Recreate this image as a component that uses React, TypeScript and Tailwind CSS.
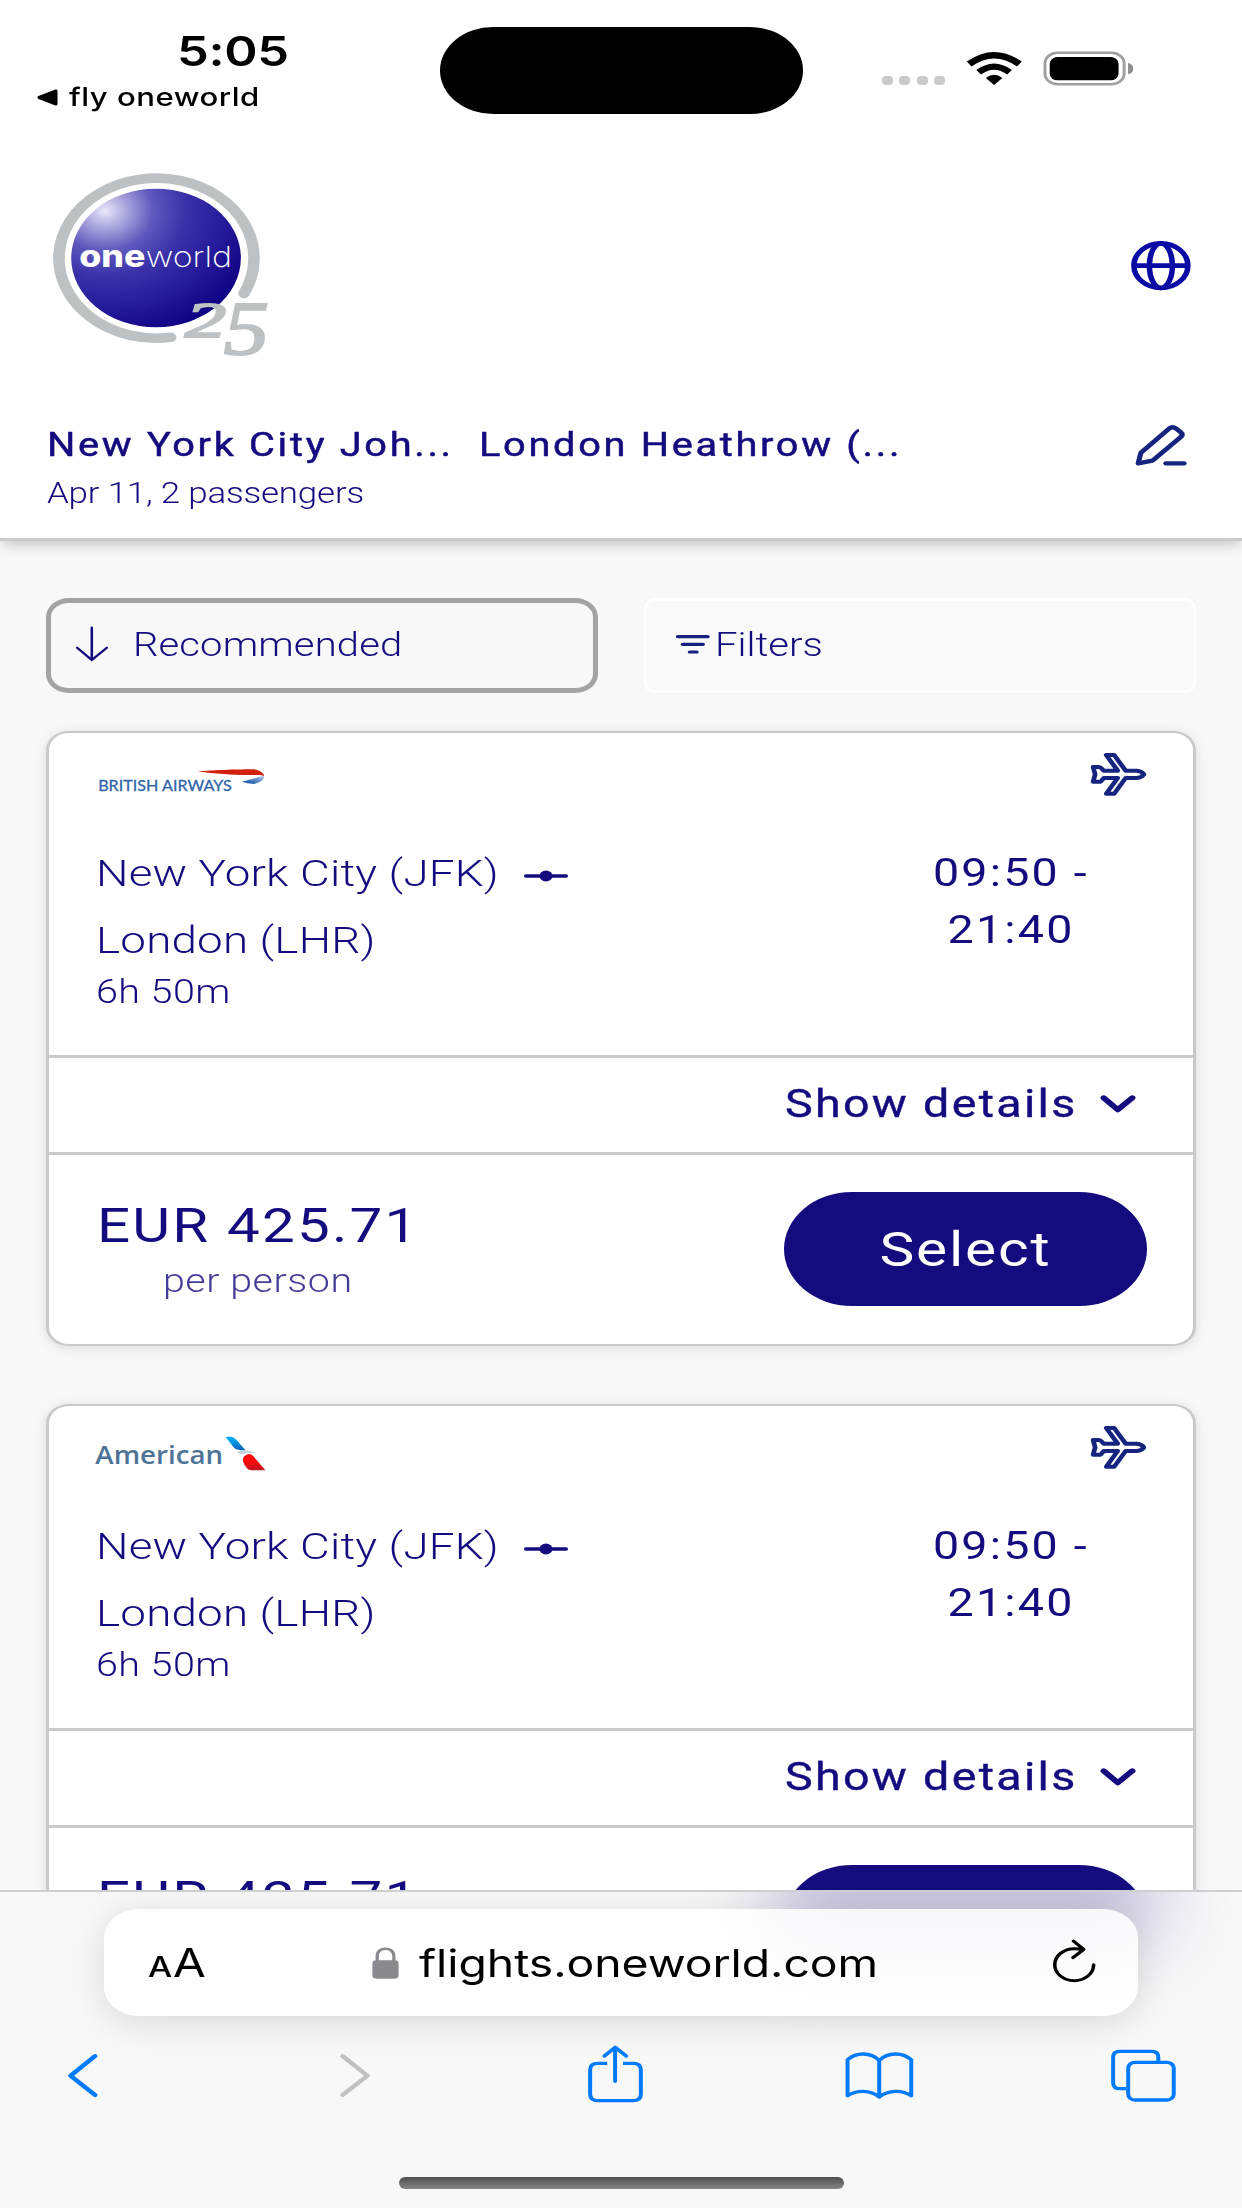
import type { ReactNode } from "react";
import clsx from "clsx";

interface Flight {
  id: number;
  airline: "BA" | "AA";
  from: string;
  to: string;
  duration: string;
  departure: string;
  arrival: string;
  price: string;
}

const flights: Flight[] = [
  {
    id: 1,
    airline: "BA",
    from: "New York City (JFK)",
    to: "London (LHR)",
    duration: "6h 50m",
    departure: "09:50",
    arrival: "21:40",
    price: "EUR 425.71",
  },
  {
    id: 2,
    airline: "AA",
    from: "New York City (JFK)",
    to: "London (LHR)",
    duration: "6h 50m",
    departure: "09:50",
    arrival: "21:40",
    price: "EUR 425.71",
  },
];

// Wide text: every label on the page is stretched sideways by the same factor
function Wide({
  className,
  children,
}: {
  className?: string;
  children: ReactNode;
}) {
  return (
    <span
      className={clsx(
        "inline-block whitespace-nowrap scale-x-[1.22]",
        className
      )}
    >
      {children}
    </span>
  );
}

function StatusBar() {
  return (
    <div className="flex h-[140px] shrink-0 font-['Inter',sans-serif] text-black">
      <div className="w-[440px] pt-[25px]">
        <div className="ml-[133px] w-[200px] text-center text-[41.5px] leading-[52px] font-semibold tracking-[-0.3px]">
          <Wide>5:05</Wide>
        </div>
        <div className="mt-[5px] ml-[37px] flex h-[30px] items-center">
          <svg className="h-[17px] w-[21px]" viewBox="0 0 21 17">
            <path
              d="M2 8.5 L19 2 V15 Z"
              fill="#000"
              stroke="#000"
              strokeWidth="3"
              strokeLinejoin="round"
            />
          </svg>
          <Wide className="ml-[11px] origin-left text-[25.5px] leading-[30px] font-medium tracking-[0.4px]">
            fly oneworld
          </Wide>
        </div>
      </div>

      <div className="mt-[26.5px] h-[87.5px] w-[362.5px] rounded-[54px/44px] bg-black" />

      <div className="mt-[51px] ml-[79.5px] flex h-[35px]">
        <div className="mt-[25px] flex gap-[6.3px]">
          {[0, 1, 2, 3].map((dot) => (
            <div
              key={dot}
              className="h-[9px] w-[11px] rounded-[4px] bg-[#cbcbcb]"
            />
          ))}
        </div>
        <svg
          className="ml-[21px] h-[35px] w-[56.2px]"
          viewBox="871 152 142 105"
          preserveAspectRatio="none"
          fill="none"
          stroke="#000"
        >
          <path d="M879 191 Q942 138 1006 191" strokeWidth="19" />
          <path d="M903 216 Q942 182 981 216" strokeWidth="18" />
          <path
            d="M921 233 Q942 213 963 233 L942 254 Z"
            fill="#000"
            stroke="none"
          />
        </svg>
        <svg
          className="ml-[21px] h-[35px] w-[91px]"
          viewBox="1066 152 230 105"
          preserveAspectRatio="none"
        >
          <rect
            x="1071"
            y="157"
            width="200"
            height="95"
            rx="32"
            fill="none"
            stroke="#a0a0a0"
            strokeWidth="7.5"
          />
          <rect x="1083" y="170" width="174" height="70" rx="20" />
          <path
            d="M1281 188 Q1294 192 1294 205 Q1294 218 1281 222 Z"
            fill="#8c8c8c"
          />
        </svg>
      </div>
    </div>
  );
}

function OneworldLogo() {
  return (
    <svg
      className="h-[190px] w-[222px] overflow-visible"
      viewBox="130 510 560 570"
      preserveAspectRatio="none"
    >
      <defs>
        <radialGradient id="ball" cx="0.2" cy="0.16" r="0.95">
          <stop offset="0" stopColor="#e9e6fa" />
          <stop offset="0.14" stopColor="#a7a2dc" />
          <stop offset="0.3" stopColor="#5f58bd" />
          <stop offset="0.5" stopColor="#3a31a9" />
          <stop offset="0.75" stopColor="#241999" />
          <stop offset="1" stopColor="#0e0082" />
        </radialGradient>
      </defs>
      <ellipse cx="395" cy="774" rx="214" ry="208" fill="url(#ball)" />
      <path d="M600 880 L556 914 L527 938 L466 975 L440 1000 H600 Z" fill="#fff" />
      <path
        d="M617 880 A246 240 0 1 0 432 1012"
        fill="none"
        stroke="#bdc1c4"
        strokeWidth="29"
        strokeLinecap="round"
      />
      <text
        x="201"
        y="801"
        fill="#fff"
        fontFamily="Inter, sans-serif"
        fontSize="90"
        fontWeight="800"
        textLength="167"
        lengthAdjust="spacingAndGlyphs"
      >
        one
      </text>
      <text
        x="369"
        y="801"
        fill="#fff"
        fontFamily="Inter, sans-serif"
        fontSize="86"
        fontWeight="200"
        textLength="218"
        lengthAdjust="spacingAndGlyphs"
      >
        world
      </text>
      <g
        fill="#bdc1c4"
        stroke="#bdc1c4"
        strokeWidth="6"
        fontFamily="Liberation Serif, serif"
        fontStyle="italic"
      >
        <text
          x="468"
          y="1012"
          fontSize="150"
          textLength="104"
          lengthAdjust="spacingAndGlyphs"
        >
          2
        </text>
        <text
          x="566"
          y="1062"
          fontSize="226"
          textLength="114"
          lengthAdjust="spacingAndGlyphs"
        >
          5
        </text>
      </g>
    </svg>
  );
}

function Header() {
  return (
    <header className="relative z-10 h-[541px] shrink-0 border-b-[3px] border-[#cbcbcb] bg-white text-[#140b7f] shadow-[0_6px_12px_-2px_rgba(0,0,0,0.2)]">
      <StatusBar />
      <div className="mt-[30px] flex h-[190px] items-center justify-between pr-[50px] pl-[51px]">
        <OneworldLogo />
        <svg
          className="mt-px h-[53.3px] w-[63.4px]"
          viewBox="1283 716 160 160"
          preserveAspectRatio="none"
          fill="none"
          stroke="#0a0aa5"
          strokeWidth="14"
        >
          <ellipse cx="1363.5" cy="796" rx="68" ry="67" />
          <ellipse cx="1363.5" cy="796" rx="29" ry="67" />
          <path d="M1296 796 H1431" />
        </svg>
      </div>
      <div className="mt-[63px] flex items-start justify-between pr-[53px] pl-[46.5px]">
        <div>
          <div className="flex text-[32.6px] leading-[44px] tracking-[2.2px] [-webkit-text-stroke:0.5px_#140b7f]">
            <div className="w-[432px]">
              <Wide className="origin-left">New York City Joh...</Wide>
            </div>
            <Wide className="origin-left">London Heathrow (...</Wide>
          </div>
          <Wide className="mt-[6px] origin-left text-[28.6px] leading-[40px] font-light tracking-[-0.15px]">
            Apr 11, 2 passengers
          </Wide>
        </div>
        <svg
          className="h-[44.7px] w-[56.2px]"
          viewBox="1293 69 142 134"
          preserveAspectRatio="none"
          fill="none"
          stroke="#15257f"
          strokeWidth="13"
          strokeLinecap="round"
          strokeLinejoin="round"
        >
          <path d="M1306 190 L1313 158 L1384 86 Q1393 78 1402 86 L1414 97 Q1421 104 1413 112 L1342 182 Z" />
          <path d="M1376 190 H1422" />
        </svg>
      </div>
    </header>
  );
}

function SortBar() {
  return (
    <div className="grid grid-cols-2 gap-[46px] text-[32.8px] font-light">
      <button className="flex h-[95px] items-center rounded-[23px/19px] border-[5px] border-[#a3a3a3] pl-[23px]">
        <svg
          className="-mt-[3px] h-[36px] w-[36.4px]"
          viewBox="188 675 92 108"
          preserveAspectRatio="none"
          fill="none"
          stroke="#140b7f"
          strokeWidth="6.5"
          strokeLinecap="round"
        >
          <path d="M233 680 V776 M196 740 L233 777 L271 740" />
        </svg>
        <Wide className="mt-px ml-[22.5px] origin-left tracking-[0.1px]">
          Recommended
        </Wide>
      </button>
      <button className="flex h-[95px] items-center rounded-[12px/10px] border-[3px] border-white bg-[#f9f9f9] pl-[28px]">
        <svg
          className="-mt-[2px] h-[23px] w-[36px]"
          viewBox="137 699 91 69"
          preserveAspectRatio="none"
          stroke="#15207f"
          strokeWidth="9.5"
          strokeLinecap="round"
        >
          <path d="M144 710 H220 M156 733 H208 M174 756 H192" />
        </svg>
        <Wide className="mt-px ml-[4px] origin-left">Filters</Wide>
      </button>
    </div>
  );
}

function BritishAirwaysLogo() {
  return (
    <svg
      className="mt-[10px] h-[40px] w-[178px]"
      viewBox="235 122 450 120"
      preserveAspectRatio="none"
    >
      <defs>
        <linearGradient id="ribbon" x1="0" y1="1" x2="1" y2="0">
          <stop offset="0.3" stopColor="#2a63ae" />
          <stop offset="1" stopColor="#b9cfee" />
        </linearGradient>
      </defs>
      <text
        x="248"
        y="213"
        fill="#2f64a8"
        stroke="#2f64a8"
        strokeWidth="0.8"
        fontFamily="Lato, sans-serif"
        fontSize="43.5"
        textLength="338"
        lengthAdjust="spacingAndGlyphs"
      >
        BRITISH AIRWAYS
      </text>
      <path
        d="M500 153 C560 148 620 147 640 147 C658 148 668 160 668 168 C664 164 655 163 640 164 C600 165 550 162 500 153 Z"
        fill="#d3200f"
      />
      <path
        d="M611 184 C635 178 655 168 667 167 Q670 182 642 191 Q625 190 611 184 Z"
        fill="url(#ribbon)"
      />
    </svg>
  );
}

function AmericanLogo() {
  return (
    <svg
      className="mt-[10px] h-[40px] w-[178px]"
      viewBox="235 130 450 120"
      preserveAspectRatio="none"
    >
      <defs>
        <linearGradient id="aaBlue" x1="0" y1="0" x2="0" y2="1">
          <stop offset="0" stopColor="#00b4ff" />
          <stop offset="1" stopColor="#0a62b8" />
        </linearGradient>
        <linearGradient id="aaRed" x1="0" y1="0" x2="0" y2="1">
          <stop offset="0.4" stopColor="#ff0a0a" />
          <stop offset="1" stopColor="#c0141f" />
        </linearGradient>
      </defs>
      <text
        x="241"
        y="221"
        fill="#4d7396"
        fontFamily="Open Sans, sans-serif"
        fontSize="76"
        fontWeight="600"
        textLength="323"
        lengthAdjust="spacingAndGlyphs"
      >
        American
      </text>
      <path
        d="M570 138 H584 Q592 139 597 147 L621 179 Q600 180 592 172 Z"
        fill="url(#aaBlue)"
      />
      <path d="M598 184 Q625 174 647 187 Q622 184 612 192 Z" fill="#c5d3da" />
      <path
        d="M628 190 Q610 196 615 215 Q622 236 634 239 H671 L640 196 Q636 190 628 190 Z"
        fill="url(#aaRed)"
      />
    </svg>
  );
}

function FlightCard({ flight }: { flight: Flight }) {
  return (
    <div className="flex h-[615px] shrink-0 flex-col rounded-[23px/19px] border-x-[3px] border-y-[2.5px] border-[#c9c9c9] bg-white shadow-[0_2px_12px_rgba(0,0,0,0.12)]">
      <div className="h-[322px] px-[44px] pt-[18px]">
        <div className="flex h-[60px] items-start justify-between">
          {flight.airline === "BA" ? <BritishAirwaysLogo /> : <AmericanLogo />}
          <svg
            className="h-[46.7px] w-[61px]"
            viewBox="1180 94 154 140"
            preserveAspectRatio="none"
            fill="none"
            stroke="#15257f"
            strokeWidth="12"
            strokeLinejoin="round"
          >
            <path d="M1193 142 H1207 Q1212 142 1215 147 L1220 153 H1255 L1226 106 H1246 L1275 153 H1303 Q1316 154 1321 164 Q1316 174 1303 175 H1275 L1246 222 H1226 L1255 175 H1220 L1212 186 H1193 L1198 164 Z" />
          </svg>
        </div>
        <div className="flex justify-between pt-[29px] pl-[2.5px] text-[37.5px]">
          <div className="font-light">
            <div className="flex h-[67px] items-center leading-[67px]">
              <div className="w-[428.5px]">
                <Wide className="origin-left tracking-[0.15px]">
                  {flight.from}
                </Wide>
              </div>
              <svg
                className="mt-[4px] h-[12px] w-[44px]"
                viewBox="0 0 44 12"
                fill="#140b7f"
              >
                <rect y="4.2" width="44" height="3.6" rx="1.8" />
                <ellipse cx="22" cy="6" rx="6.6" ry="5.4" />
              </svg>
            </div>
            <div className="mt-[2.5px] leading-[60px]">
              <Wide className="origin-left tracking-[0.15px]">{flight.to}</Wide>
            </div>
            <div className="text-[32.4px] leading-[44px]">
              <Wide className="origin-left tracking-[0.35px]">
                {flight.duration}
              </Wide>
            </div>
          </div>
          <div className="mt-[5px] mr-[38px] w-[200px] text-center text-[38.2px] leading-[57px] tracking-[1.8px]">
            <Wide>{flight.departure} -</Wide>
            <Wide>{flight.arrival}</Wide>
          </div>
        </div>
      </div>

      <div className="flex h-[97px] items-center justify-end border-t-[3px] border-[#cbcbcb] pr-[56px] text-[38.2px]">
        <div className="-mt-[2px] mr-[24px] w-[290px]">
          <Wide className="origin-left leading-[60px] tracking-[1.9px] [-webkit-text-stroke:0.4px_#140b7f]">
            Show details
          </Wide>
        </div>
        <svg
          className="-mt-[2px] h-[20px] w-[38px]"
          viewBox="1206 159 97 61"
          preserveAspectRatio="none"
          fill="none"
          stroke="#140b7f"
          strokeWidth="16"
          strokeLinecap="round"
          strokeLinejoin="round"
        >
          <path d="M1218 171 L1254 207 L1291 171" />
        </svg>
      </div>

      <div className="flex flex-1 items-start justify-between border-t-[3px] border-[#cbcbcb] pr-[46px] pl-[49px]">
        <div className="mt-[41px] w-[320px] text-center">
          <Wide className="text-[47.8px] leading-[60px] tracking-[1.8px]">
            {flight.price}
          </Wide>
          <Wide className="mt-[3px] text-[32.3px] leading-[44px] font-light tracking-[0.45px] opacity-80">
            per person
          </Wide>
        </div>
        <button className="mt-[37px] h-[114px] w-[363px] rounded-[68px/57px] bg-[#140b7f] pt-[2px] text-[48px] tracking-[1.5px] text-white">
          <Wide>Select</Wide>
        </button>
      </div>
    </div>
  );
}

function BarIcon({
  className,
  viewBox,
  children,
}: {
  className: string;
  viewBox: string;
  children: ReactNode;
}) {
  return (
    <svg
      className={clsx("h-full shrink-0", className)}
      viewBox={viewBox}
      preserveAspectRatio="none"
      fill="none"
      stroke="currentColor"
      strokeWidth="10"
      strokeLinecap="round"
      strokeLinejoin="round"
    >
      {children}
    </svg>
  );
}

function BrowserBar() {
  return (
    <div className="relative z-10 h-[318px] shrink-0 overflow-hidden border-t-2 border-[#cfcfd1] bg-[#f8f8f8] font-['Inter',sans-serif]">
      {/* colour of the button underneath shining through */}
      <div className="absolute -top-[50px] left-[780px] h-[96px] w-[375px] bg-[#bcb8d8] blur-[38px]" />

      <div className="relative flex h-full flex-col">
        <div className="mx-[104px] mt-[17px] flex h-[107px] shrink-0 items-center rounded-[35px/29px] bg-white/85 pl-[44px] text-black shadow-[0_6px_36px_rgba(0,0,0,0.13)]">
          <div className="mt-px flex w-[222px] items-baseline">
            <div className="w-[25px] text-[28px] font-medium">
              <Wide className="origin-left">A</Wide>
            </div>
            <div className="text-[39px]">
              <Wide className="origin-left">A</Wide>
            </div>
          </div>
          <svg
            className="h-[34px] w-[31px]"
            viewBox="934 286 78 102"
            preserveAspectRatio="none"
          >
            <rect x="940" y="329" width="66" height="55" rx="10" fill="#8a8a8e" />
            <path
              d="M952 332 V316 C952 287 994 287 994 316 V332"
              fill="none"
              stroke="#8a8a8e"
              strokeWidth="8"
            />
          </svg>
          <div className="mt-px ml-[18px] w-[631px] text-[38px]">
            <Wide className="origin-left tracking-[-0.05px]">
              flights.oneworld.com
            </Wide>
          </div>
          <svg
            className="-mt-[3px] h-[46px] w-[48px]"
            viewBox="1084 264 121 138"
            preserveAspectRatio="none"
            fill="none"
            stroke="#000"
            strokeWidth="9"
            strokeLinecap="round"
            strokeLinejoin="round"
          >
            <path d="M1194 344 A49 48 0 1 1 1145 296 Q1158 296 1168 299 M1143 273 L1169 298 L1142 323" />
          </svg>
        </div>

        <div className="mt-[27px] flex h-[62.7px] shrink-0 text-[#007aff]">
          <BarIcon className="ml-[65px] w-[35.6px]" viewBox="165 578 90 188">
            <path d="M241 617 L179 676 L241 734" strokeWidth="12" />
          </BarIcon>
          <BarIcon
            className="ml-[236px] w-[35.6px] text-[#c1c1c2]"
            viewBox="850 578 90 188"
          >
            <path d="M864 617 L927 676 L864 734" strokeWidth="12" />
          </BarIcon>
          <BarIcon className="ml-[213px] w-[61px]" viewBox="1478 578 154 188">
            <path
              d="M1534 639 H1510 Q1491 639 1491 658 V732 Q1491 751 1510 751 H1600 Q1619 751 1619 732 V658 Q1619 639 1600 639 H1574"
              strokeLinecap="butt"
            />
            <path d="M1554 592 V693 M1527 617 L1554 591 L1582 617" />
          </BarIcon>
          <BarIcon className="ml-[196px] w-[75.2px]" viewBox="558 578 190 188">
            <path d="M652 630 C630 605 595 605 572 628 V736 C595 718 630 718 652 740 C675 718 710 718 733 736 V628 C710 605 675 605 652 630 V740" />
          </BarIcon>
          <BarIcon className="ml-[191px] w-[70.5px]" viewBox="1230 578 178 188">
            <rect x="1281" y="636" width="115" height="113" rx="17" />
            <path
              d="M1357 632 V620 Q1357 603 1340 603 H1260 Q1243 603 1243 620 V698 Q1243 715 1260 715 H1276"
              strokeLinecap="butt"
            />
          </BarIcon>
        </div>

        <div className="mx-auto mt-[71px] h-[12px] w-[445px] rounded-full bg-gradient-to-b from-[#505050] to-[#868686]" />
      </div>
    </div>
  );
}

export default function App() {
  return (
    <div className="flex h-[2208px] w-[1242px] flex-col overflow-hidden bg-[#f8f8f8] font-['Roboto',sans-serif] text-[#140b7f]">
      <Header />
      <main className="min-h-0 flex-1 overflow-hidden px-[46px] pt-[57px]">
        <SortBar />
        <div className="mt-[38px] flex flex-col gap-[58px]">
          {flights.map((flight) => (
            <FlightCard key={flight.id} flight={flight} />
          ))}
        </div>
      </main>
      <BrowserBar />
    </div>
  );
}
